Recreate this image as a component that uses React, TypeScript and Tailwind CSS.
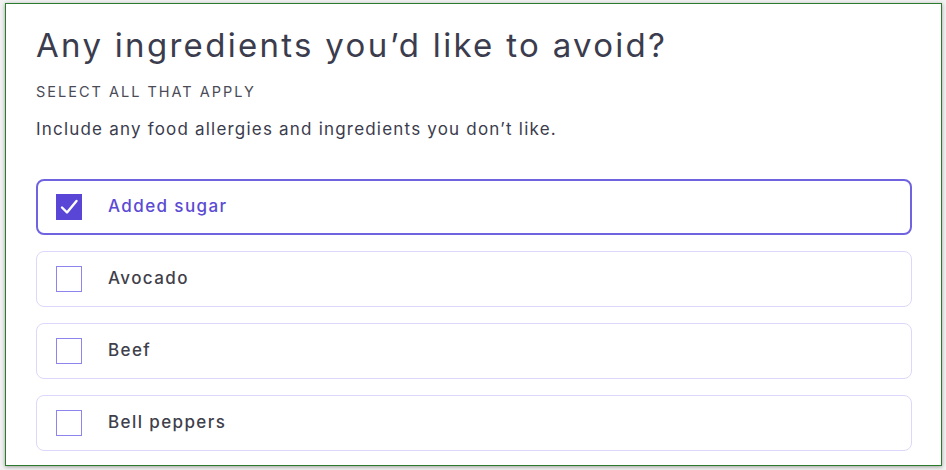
import React from "react";

const items = [
  { label: "Added sugar", checked: true },
  { label: "Avocado", checked: false },
  { label: "Beef", checked: false },
  { label: "Bell peppers", checked: false },
];

export default function App() {
  return (
    <div className="w-[946px] h-[470px] bg-[#f2f2f2] pt-[3px] pl-[5px]" style={{ fontFamily: "Inter, 'Noto Sans', sans-serif" }}>
      <div className="w-[937px] h-[463px] bg-white border border-[#2b7a2e] shadow-[0_1px_4px_rgba(0,0,0,0.35)] overflow-hidden pl-[30px] pr-[29px]">
        <h1 className="mt-[21px] text-[33px] leading-[40px] text-[#3b3c4d] tracking-[2.3px] font-normal">Any ingredients you’d like to avoid?</h1>
        <div className="mt-[19px] text-[14.5px] leading-[16px] tracking-[2px] text-[#4a4b57]">SELECT ALL THAT APPLY</div>
        <p className="mt-[19px] text-[17px] leading-[20px] text-[#3b3c4d] tracking-[1.2px]">Include any food allergies and ingredients you don’t like.</p>
        <div className="mt-[40px] flex flex-col gap-[16px]">
          {items.map((it) => (
            <div
              key={it.label}
              className={
                it.checked
                  ? "h-[56px] rounded-[8px] border-2 border-[#6f63e0] flex items-center pl-[18px]"
                  : "h-[56px] rounded-[8px] border border-[#ddd8fb] flex items-center pl-[19px]"
              }
            >
              {it.checked ? (
                <div className="w-[26px] h-[26px] bg-[#5a46d6] flex items-center justify-center">
                  <svg width="22" height="22" viewBox="0 0 22 22" fill="none">
                    <path d="M4 11.5 L9 16.5 L18.5 5" stroke="white" strokeWidth="2.4" strokeLinecap="round" strokeLinejoin="round" />
                  </svg>
                </div>
              ) : (
                <div className="w-[26px] h-[26px] border-[1.5px] border-[#8e84ee]" />
              )}
              <span
                className={
                  it.checked
                    ? "ml-[26px] text-[17px] font-medium text-[#5b4bd3] tracking-[1.4px]"
                    : "ml-[26px] text-[17px] font-medium text-[#3f3f4c] tracking-[1.4px]"
                }
              >
                {it.label}
              </span>
            </div>
          ))}
        </div>
      </div>
    </div>
  );
}
